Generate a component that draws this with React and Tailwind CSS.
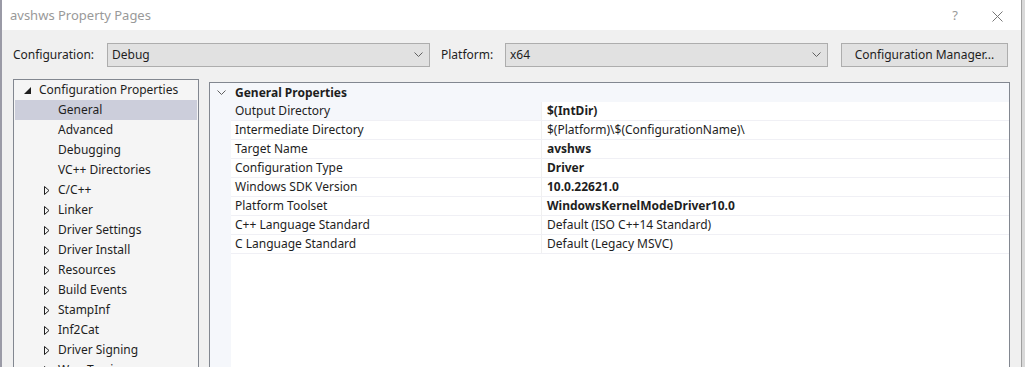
import { useState } from "react"

const treeItems = [
  { label: "General", selected: true },
  { label: "Advanced" },
  { label: "Debugging" },
  { label: "VC++ Directories" },
  { label: "C/C++", collapsed: true },
  { label: "Linker", collapsed: true },
  { label: "Driver Settings", collapsed: true },
  { label: "Driver Install", collapsed: true },
  { label: "Resources", collapsed: true },
  { label: "Build Events", collapsed: true },
  { label: "StampInf", collapsed: true },
  { label: "Inf2Cat", collapsed: true },
  { label: "Driver Signing", collapsed: true },
  { label: "Wpp Tracing", collapsed: true },
]

const properties = [
  { name: "Output Directory", value: "$(IntDir)", bold: true, active: true },
  { name: "Intermediate Directory", value: "$(Platform)\\$(ConfigurationName)\\" },
  { name: "Target Name", value: "avshws", bold: true },
  { name: "Configuration Type", value: "Driver", bold: true },
  { name: "Windows SDK Version", value: "10.0.22621.0", bold: true },
  { name: "Platform Toolset", value: "WindowsKernelModeDriver10.0", bold: true },
  { name: "C++ Language Standard", value: "Default (ISO C++14 Standard)" },
  { name: "C Language Standard", value: "Default (Legacy MSVC)" },
]

function Chevron() {
  return (
    <svg width="9" height="6" viewBox="0 0 9 6" className="text-[#606060]">
      <path d="M0.5 0.5 L4.5 4.5 L8.5 0.5" fill="none" stroke="currentColor" strokeWidth="1" />
    </svg>
  )
}

function Combo({ value }) {
  return (
    <div className="w-[323px] h-[24px] bg-[#e1e1e1] border border-[#adadad] flex items-center justify-between pl-[4px] pr-[6px]">
      <span>{value}</span>
      <Chevron />
    </div>
  )
}

function CollapsedArrow() {
  return (
    <svg width="6" height="9" viewBox="0 0 6 9">
      <path d="M0.5 0.5 L5 4.5 L0.5 8.5 Z" fill="none" stroke="#1e1e1e" strokeWidth="1" />
    </svg>
  )
}

function ExpandedArrow() {
  return (
    <svg width="7" height="7" viewBox="0 0 7 7">
      <path d="M7 0 L7 7 L0 7 Z" fill="#1e1e1e" />
    </svg>
  )
}

export default function App() {
  const [selected, setSelected] = useState("General")

  return (
    <div
      className="w-[1025px] h-[367px] overflow-hidden flex bg-[#f0f0f0] text-[12px] text-[#1e1e1e]"
      style={{ fontFamily: '"Noto Sans", "Liberation Sans", sans-serif' }}
    >
      <div className="w-[2px] bg-[#9a9aa6]" />

      <div className="flex-1 flex flex-col">
        {/* Title bar */}
        <div className="h-[30px] bg-white flex items-center pt-[2px] pl-[8px] pr-[18px] shrink-0">
          <span className="text-[13px] text-[#999999]">avshws Property Pages</span>
          <span className="ml-auto text-[13px] text-[#999999] mr-[34px]">?</span>
          <svg width="11" height="11" viewBox="0 0 11 11">
            <path d="M0.5 0.5 L10.5 10.5 M10.5 0.5 L0.5 10.5" stroke="#777" strokeWidth="1" />
          </svg>
        </div>

        {/* Configuration row */}
        <div className="flex items-center pl-[11px] pt-[13px] h-[37px] shrink-0">
          <span className="w-[94px]">Configuration:</span>
          <Combo value="Debug" />
          <span className="ml-[11px] w-[64px]">Platform:</span>
          <Combo value="x64" />
          <button className="ml-[13px] w-[167px] h-[24px] -mt-[1px] bg-[#e1e1e1] border border-[#adadad] text-[12px]">
            Configuration Manager...
          </button>
        </div>

        {/* Panels */}
        <div className="flex pl-[11px] gap-[10px] mt-[12px] flex-1 min-h-0">
          {/* Tree */}
          <div className="w-[186px] border border-[#828790] bg-[#f5f5f5] px-[1px] overflow-hidden self-stretch mb-[-20px]">
            <div className="h-[20px] flex items-center pl-[9px]">
              <ExpandedArrow />
              <span className="ml-[8px]">Configuration Properties</span>
            </div>
            {treeItems.map((item) => (
              <div
                key={item.label}
                onClick={() => setSelected(item.label)}
                className={
                  "h-[20px] flex items-center pl-[29px] " +
                  (selected === item.label ? "bg-[#cccedb]" : "")
                }
              >
                <span className="w-[14px] flex items-center">
                  {item.collapsed && <CollapsedArrow />}
                </span>
                <span>{item.label}</span>
              </div>
            ))}
          </div>

          {/* Property grid */}
          <div className="w-[801px] mt-[3px] border border-[#828790] bg-white self-stretch mb-[-20px] flex flex-col">
            <div className="h-[19px] bg-[#f5f7fb] flex items-center pl-[7px]">
              <Chevron />
              <span className="ml-[9px] font-bold">General Properties</span>
            </div>
            <div className="flex flex-1">
              <div className="w-[21px] bg-[#f5f7fb]" />
              <div className="flex-1">
                {properties.map((p) => (
                  <div key={p.name} className="h-[19px] flex border-b border-[#f0f0f5]">
                    <div
                      className={
                        "w-[311px] flex items-center pl-[4px] border-r border-[#f0f0f0] " +
                        (p.active ? "bg-[#f5f7fb]" : "")
                      }
                    >
                      {p.name}
                    </div>
                    <div className={"flex-1 flex items-center pl-[5px] " + (p.bold ? "font-bold" : "")}>
                      {p.value}
                    </div>
                  </div>
                ))}
              </div>
            </div>
          </div>
        </div>
      </div>

      <div className="w-[4px] border-l border-[#a0a0a0] bg-[#d9d9d9]" />
    </div>
  )
}
